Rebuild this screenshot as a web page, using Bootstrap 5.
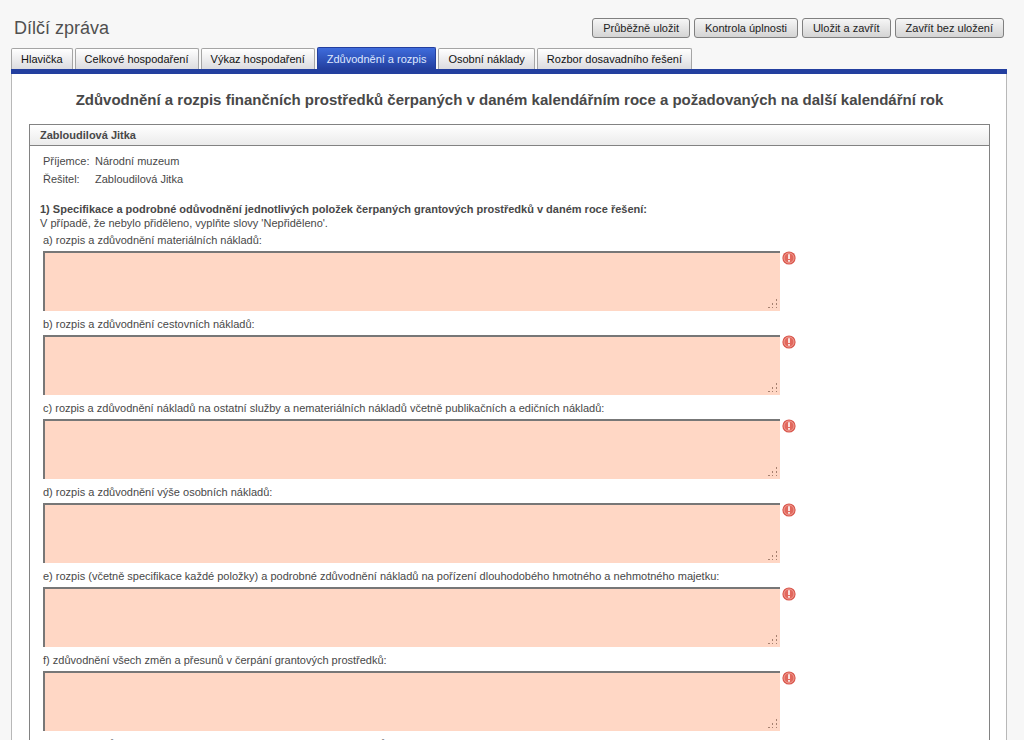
<!DOCTYPE html>
<html lang="cs">
<head>
<meta charset="utf-8">
<meta name="viewport" content="width=device-width, initial-scale=1">
<title>Dílčí zpráva</title>
<link href="https://cdn.jsdelivr.net/npm/bootstrap@5.3.0/dist/css/bootstrap.min.css" rel="stylesheet">
<style>
body { font-family: "Liberation Sans", Arial, sans-serif; font-size: 11px; line-height: 14px; color: #484848; background: #f7f7f7; height: 100vh; overflow: hidden; }
.page-wrap { padding: 0 17px 0 11px; }
.top-row { padding: 18px 3px 0; }
.page-title { font-size: 18px; line-height: 20px; color: #505050; }
.tool-group { gap: 4px; }
.btn-tool { font-size: 11px; line-height: 18px; height: 20px; padding: 0 10px; color: #222; border: 1px solid #808080; border-radius: 3px; background: linear-gradient(#f6f6f6, #d4d4d4); }
.nav-tabs { gap: 2px; padding-top: 9px; border-bottom: 5px solid #233f9f; }
.nav-tabs .nav-link { font-size: 11px; line-height: 20px; height: 21px; margin: 0; padding: 0 9px; color: #111; border: 1px solid #a5a5a5; border-bottom: 0; border-radius: 2px 2px 0 0; background: linear-gradient(#fff, #dcdcdf); }
.nav-tabs .nav-link.active { height: 22px; line-height: 22px; color: #dfe8ff; border-color: #233f9f; background: linear-gradient(#3f6cdc, #233f9f); }
.sheet { background: #fff; border: solid #b8b8b8; border-width: 0 1px; padding: 18px 16px 24px 17px; }
.sheet-title { font-size: 15px; line-height: 16px; margin-bottom: 16px; }
.panel { border: 1px solid #828282; }
.panel-head { font-size: 11px; line-height: 20px; padding: 0 10px; margin: 0; border-bottom: 1px solid #828282; background: linear-gradient(#fff, #ebebeb); }
.who { margin: 6px 0 14px 13px; display: grid; grid-template-columns: 52px 1fr; line-height: 18px; }
.who dt { font-weight: 400; }
.who dd { margin: 0; }
.intro { margin: 0 10px 2px; }
.intro h3 { font-size: 11px; line-height: 14px; margin: 0; }
.entry { margin: 0 13px 5px; }
.entry label { line-height: 16px; margin-bottom: 3px; }
.field { width: 737px; max-width: 90%; }
.field textarea { display: block; width: 100%; height: 60px; border: solid #777; border-width: 2px 0 0 2px; padding: 2px; resize: none; background: #ffd7c5; }
.grip { position: absolute; right: 2px; bottom: 2px; }
.warn { margin-left: 2px; }
</style>
</head>
<body>
<svg class="d-none">
  <symbol id="grip" viewBox="0 0 10 10"><path fill="#a5806f" d="M8 0h1v2H8zM4 4h1v2H4zM8 4h1v2H8zM0 8h2v1H0zM4 8h1v1H4zM8 8h1v1H8z"/></symbol>
  <symbol id="warn" viewBox="0 0 14 14"><circle cx="7" cy="7" r="6.6" fill="#d9564c"/><circle cx="7" cy="7" r="5" fill="#e2685d" stroke="#f3aea5" stroke-width=".8"/><path fill="#fff" d="M6.2 3.2h1.6v4.9H6.2zM6.2 9.1h1.6v1.7H6.2z"/></symbol>
</svg>
<div class="page-wrap">
  <header class="top-row d-flex align-items-center justify-content-between">
    <h1 class="page-title m-0">Dílčí zpráva</h1>
    <div class="tool-group d-flex">
      <button type="button" class="btn-tool">Průběžně uložit</button>
      <button type="button" class="btn-tool">Kontrola úplnosti</button>
      <button type="button" class="btn-tool">Uložit a zavřít</button>
      <button type="button" class="btn-tool">Zavřít bez uložení</button>
    </div>
  </header>
  <nav class="nav nav-tabs align-items-end">
    <a class="nav-link" href="#">Hlavička</a>
    <a class="nav-link" href="#">Celkové hospodaření</a>
    <a class="nav-link" href="#">Výkaz hospodaření</a>
    <a class="nav-link active" aria-current="page" href="#">Zdůvodnění a rozpis</a>
    <a class="nav-link" href="#">Osobní náklady</a>
    <a class="nav-link" href="#">Rozbor dosavadního řešení</a>
  </nav>
  <main class="sheet">
    <h2 class="sheet-title text-center fw-bold">Zdůvodnění a rozpis finančních prostředků čerpaných v daném kalendářním roce a požadovaných na další kalendářní rok</h2>
    <section class="panel">
      <h2 class="panel-head fw-bold">Zabloudilová Jitka</h2>
      <dl class="who">
        <dt>Příjemce:</dt><dd>Národní muzeum</dd>
        <dt>Řešitel:</dt><dd>Zabloudilová Jitka</dd>
      </dl>
      <div class="intro">
        <h3 class="fw-bold">1) Specifikace a podrobné odůvodnění jednotlivých položek čerpaných grantových prostředků v daném roce řešení:</h3>
        <p class="m-0">V případě, že nebylo přiděleno, vyplňte slovy 'Nepřiděleno'.</p>
      </div>
      <div class="entry">
        <label class="d-block" for="fa">a) rozpis a zdůvodnění materiálních nákladů:</label>
        <div class="d-flex"><div class="field position-relative"><textarea id="fa"></textarea><svg class="grip" width="10" height="10"><use href="#grip"/></svg></div><svg class="warn" width="14" height="14"><use href="#warn"/></svg></div>
      </div>
      <div class="entry">
        <label class="d-block" for="fb">b) rozpis a zdůvodnění cestovních nákladů:</label>
        <div class="d-flex"><div class="field position-relative"><textarea id="fb"></textarea><svg class="grip" width="10" height="10"><use href="#grip"/></svg></div><svg class="warn" width="14" height="14"><use href="#warn"/></svg></div>
      </div>
      <div class="entry">
        <label class="d-block" for="fc">c) rozpis a zdůvodnění nákladů na ostatní služby a nemateriálních nákladů včetně publikačních a edičních nákladů:</label>
        <div class="d-flex"><div class="field position-relative"><textarea id="fc"></textarea><svg class="grip" width="10" height="10"><use href="#grip"/></svg></div><svg class="warn" width="14" height="14"><use href="#warn"/></svg></div>
      </div>
      <div class="entry">
        <label class="d-block" for="fd">d) rozpis a zdůvodnění výše osobních nákladů:</label>
        <div class="d-flex"><div class="field position-relative"><textarea id="fd"></textarea><svg class="grip" width="10" height="10"><use href="#grip"/></svg></div><svg class="warn" width="14" height="14"><use href="#warn"/></svg></div>
      </div>
      <div class="entry">
        <label class="d-block" for="fe">e) rozpis (včetně specifikace každé položky) a podrobné zdůvodnění nákladů na pořízení dlouhodobého hmotného a nehmotného majetku:</label>
        <div class="d-flex"><div class="field position-relative"><textarea id="fe"></textarea><svg class="grip" width="10" height="10"><use href="#grip"/></svg></div><svg class="warn" width="14" height="14"><use href="#warn"/></svg></div>
      </div>
      <div class="entry">
        <label class="d-block" for="ff">f) zdůvodnění všech změn a přesunů v čerpání grantových prostředků:</label>
        <div class="d-flex"><div class="field position-relative"><textarea id="ff"></textarea><svg class="grip" width="10" height="10"><use href="#grip"/></svg></div><svg class="warn" width="14" height="14"><use href="#warn"/></svg></div>
      </div>
      <div class="entry">
        <label class="d-block" for="fg">g) rozpis a zdůvodnění převodu nevyčerpaných grantových prostředků do následujícího kalendářního roku řešení:</label>
        <div class="d-flex"><div class="field position-relative"><textarea id="fg"></textarea><svg class="grip" width="10" height="10"><use href="#grip"/></svg></div><svg class="warn" width="14" height="14"><use href="#warn"/></svg></div>
      </div>
    </section>
  </main>
</div>
</body>
</html>
